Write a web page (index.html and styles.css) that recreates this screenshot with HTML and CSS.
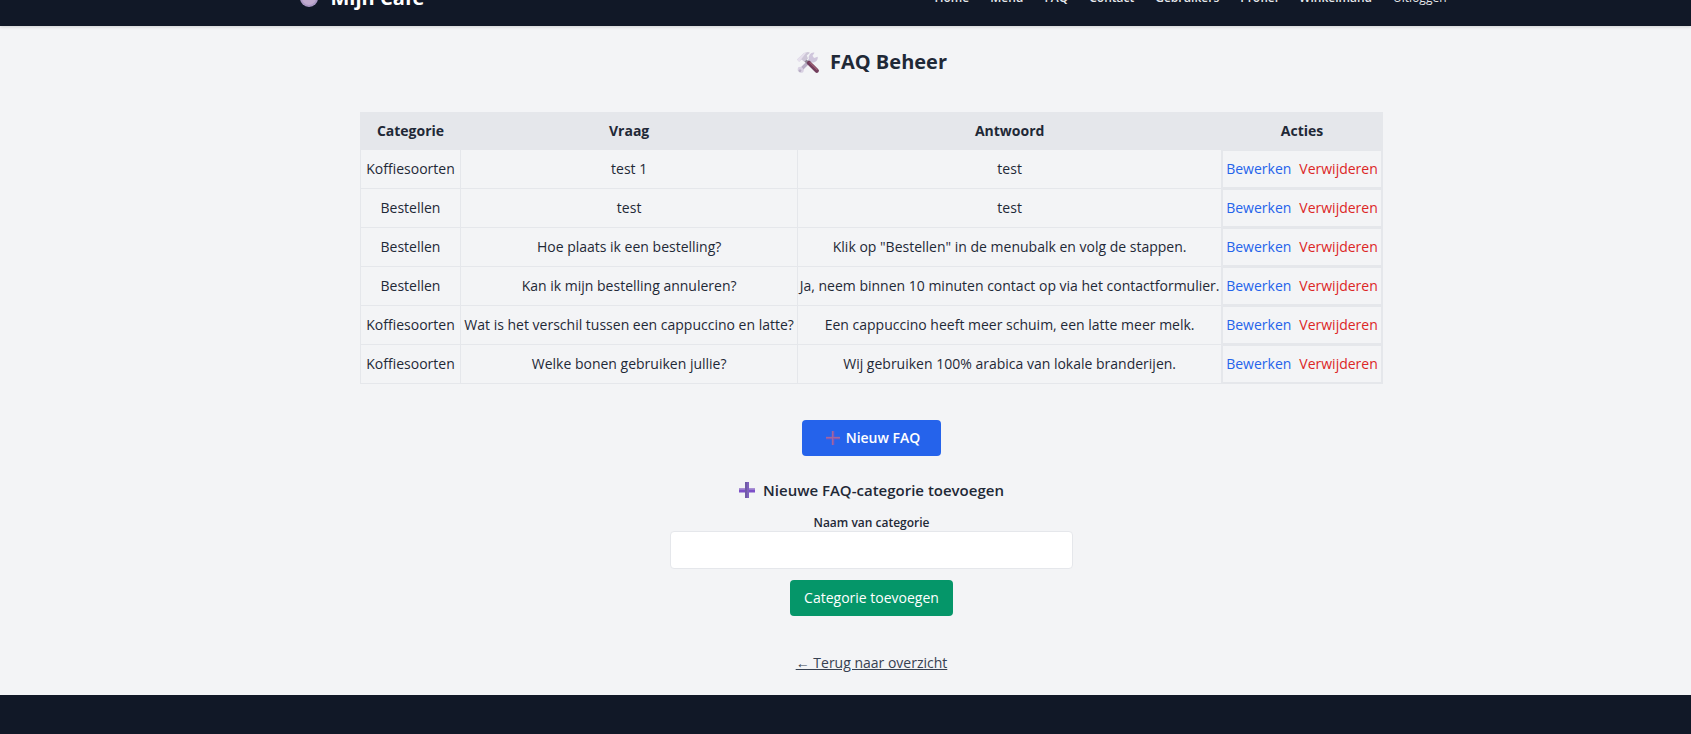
FILE: index.html
```html
<!DOCTYPE html>
<html lang="nl">
<head>
<meta charset="utf-8">
<title>FAQ Beheer - Mijn Café</title>
<link rel="stylesheet" href="styles.css">
</head>
<body>
<header class="site-header">
  <div class="header-inner">
    <a class="brand" href="#">
      <svg class="brand-icon" viewBox="0 0 20 20" aria-hidden="true"><circle cx="10" cy="10" r="9" fill="#a996c2"/><circle cx="10" cy="10" r="7" fill="#c0aace"/><circle cx="10" cy="8" r="3.500" fill="#8b4f55"/></svg>
      Mijn Café
    </a>
    <nav class="nav">
      <a href="#">Home</a><a href="#">Menu</a><a href="#">FAQ</a><a href="#">Contact</a><a href="#">Gebruikers</a><a href="#">Profiel</a><a href="#">Winkelmand</a><button class="logout" type="button">Uitloggen</button>
    </nav>
  </div>
</header>
<main class="content">
  <h1 class="title">
    <svg class="title-icon" viewBox="0 0 24 24" aria-hidden="true">
      <path d="M4 20.5 14.5 10" stroke="#b9aec6" stroke-width="3.4" stroke-linecap="round"/>
      <path d="M13 9.5a5 5 0 0 1 5.5-6.8l-2 3.1 1.6 2.2 3.6-1.3a5 5 0 0 1-6.5 5.6z" fill="#cfc6dc"/>
      <path d="M2 17.5a3.6 3.6 0 0 1 5 5l-3 .6 1.500-2.600-1.300-1.300-2.700 1.300z" fill="#d8d0e2"/>
      <path d="m8.500 9.500 4 4" stroke="#8f8797" stroke-width="3"/>
      <path d="m13 13 7.800 7.800" stroke="#713d5c" stroke-width="4.200" stroke-linecap="round"/>
      <path d="m14 12.600 7 7" stroke="#a26375" stroke-width="1.200" stroke-linecap="round"/>
      <path d="M1 9.500 8 3l4-1 2 .8-3.200 2.800 1.200 2.900-3.800 3.300-2.700-2.300-2.300 2.200z" fill="#cdc6d7"/>
      <path d="M1 9.500 8 3l2.500-.6L3.200 11.700z" fill="#e6e0ed"/>
    </svg>
    FAQ Beheer
  </h1>
  <table class="faq">
    <colgroup><col class="c-cat"><col class="c-q"><col class="c-a"><col class="c-act"></colgroup>
    <thead><tr><th>Categorie</th><th>Vraag</th><th>Antwoord</th><th>Acties</th></tr></thead>
    <tbody>
      <tr><td>Koffiesoorten</td><td>test 1</td><td>test</td><td class="act"><div class="actions"><a class="edit" href="#">Bewerken</a><button class="del" type="button">Verwijderen</button></div></td></tr>
      <tr><td>Bestellen</td><td>test</td><td>test</td><td class="act"><div class="actions"><a class="edit" href="#">Bewerken</a><button class="del" type="button">Verwijderen</button></div></td></tr>
      <tr><td>Bestellen</td><td>Hoe plaats ik een bestelling?</td><td>Klik op "Bestellen" in de menubalk en volg de stappen.</td><td class="act"><div class="actions"><a class="edit" href="#">Bewerken</a><button class="del" type="button">Verwijderen</button></div></td></tr>
      <tr><td>Bestellen</td><td>Kan ik mijn bestelling annuleren?</td><td>Ja, neem binnen 10 minuten contact op via het contactformulier.</td><td class="act"><div class="actions"><a class="edit" href="#">Bewerken</a><button class="del" type="button">Verwijderen</button></div></td></tr>
      <tr><td>Koffiesoorten</td><td>Wat is het verschil tussen een cappuccino en latte?</td><td>Een cappuccino heeft meer schuim, een latte meer melk.</td><td class="act"><div class="actions"><a class="edit" href="#">Bewerken</a><button class="del" type="button">Verwijderen</button></div></td></tr>
      <tr><td>Koffiesoorten</td><td>Welke bonen gebruiken jullie?</td><td>Wij gebruiken 100% arabica van lokale branderijen.</td><td class="act"><div class="actions"><a class="edit" href="#">Bewerken</a><button class="del" type="button">Verwijderen</button></div></td></tr>
    </tbody>
  </table>
  <a class="btn btn-new" href="#">
    <svg class="plus-sm" viewBox="0 0 14 14" aria-hidden="true"><path d="M7 0v14M0 7h14" stroke="#8459b8" stroke-width="2.500"/><path d="M6.500 0v14M0 6.500h14" stroke="#a0689f" stroke-width="1"/></svg>
    Nieuw FAQ
  </a>
  <form class="cat-form">
    <h2 class="subtitle">
      <svg class="plus" viewBox="0 0 16 16" aria-hidden="true"><path d="M0 8.500h16" stroke="#7d50c8" stroke-width="4"/><path d="M0 7h16" stroke="#a48bd0" stroke-width="1.500"/><path d="M8 0v16" stroke="#7f62bd" stroke-width="4"/><path d="M7 0v16" stroke="#6b5a9e" stroke-width="1.500"/></svg>
      Nieuwe FAQ-categorie toevoegen
    </h2>
    <label class="label" for="cat">Naam van categorie</label>
    <input class="input" id="cat" type="text">
    <button class="btn btn-add" type="button">Categorie toevoegen</button>
  </form>
  <a class="back" href="#">← Terug naar overzicht</a>
</main>
<footer class="site-footer"></footer>
</body>
</html>
```
FILE: styles.css
```css
* { box-sizing: border-box; }
html, body { height: 100%; }
body {
  margin: 0;
  display: flex;
  flex-direction: column;
  overflow: hidden;
  background: #f3f4f6;
  color: #1f2937;
  font: 14px/22px "Segoe UI", "Open Sans", "Noto Sans", sans-serif;
}
a { color: inherit; text-decoration: none; }
button { font: inherit; border: 0; background: none; padding: 0; cursor: pointer; }

.site-header {
  flex: none;
  margin-top: -30px;
  padding-left: 54px;
  background: #111827;
  color: #fff;
  box-shadow: 0 1px 3px rgba(0, 0, 0, .15);
}
.header-inner {
  display: flex;
  align-items: center;
  justify-content: space-between;
  height: 56px;
  max-width: 1148px;
  margin: 0 auto;
}
.brand { display: flex; align-items: center; gap: 12px; font-size: 20px; font-weight: 700; }
.brand-icon { width: 20px; height: 20px; }
.nav { display: flex; gap: 21px; font-size: 12px; font-weight: 600; color: #e5e7eb; }
.logout { color: inherit; font-weight: 400; }

.content {
  flex: none;
  display: flex;
  flex-direction: column;
  align-items: center;
  padding: 21px 0 21px 52px;
}
.title {
  display: flex;
  align-items: center;
  gap: 10px;
  margin: 0 0 35px;
  font-size: 20px;
  line-height: 30px;
  font-weight: 700;
}
.title-icon { width: 24px; height: 24px; fill: none; }

.faq {
  width: 100%;
  max-width: 1023px;
  table-layout: fixed;
  border-collapse: collapse;
  text-align: center;
}
.c-cat { width: 100px; }
.c-q { width: 33%; }
.c-act { width: 161px; }
.faq th, .faq td { padding: 8px 0; border: 1px solid #e5e7eb; }
.faq th { background: #e5e7eb; font-weight: 700; line-height: 20px; }
.faq .act { padding: 0; }
.actions {
  display: flex;
  justify-content: center;
  gap: 8px;
  padding: 7px 0;
  border: 1px solid #e5e7eb;
}
.edit { color: #2563eb; }
.del { color: #dc2626; }

.btn { border-radius: 4px; color: #fff; padding: 7px 14px; }
.btn-new {
  display: flex;
  align-items: center;
  gap: 6px;
  margin-top: 36px;
  padding: 7px 21px 7px 24px;
  background: #2563eb;
  font-weight: 600;
}
.plus-sm { width: 14px; height: 14px; }
.cat-form {
  display: flex;
  flex-direction: column;
  align-items: center;
  width: 100%;
  max-width: 403px;
  margin-top: 22px;
}
.subtitle {
  display: flex;
  align-items: center;
  gap: 8px;
  margin: 0 0 12px;
  font-size: 15px;
  line-height: 24px;
  font-weight: 600;
  white-space: nowrap;
}
.plus { width: 16px; height: 16px; }
.label { font-size: 12px; line-height: 17px; font-weight: 600; }
.input {
  width: 100%;
  height: 38px;
  padding: 8px;
  border: 1px solid #e5e7eb;
  border-radius: 4px;
  background: #fff;
  font: inherit;
}
.btn-add { margin-top: 11px; background: #059669; }
.back { margin-top: 36px; color: #374151; text-decoration: underline; }
.site-footer { flex: 1; background: #111827; }
```
